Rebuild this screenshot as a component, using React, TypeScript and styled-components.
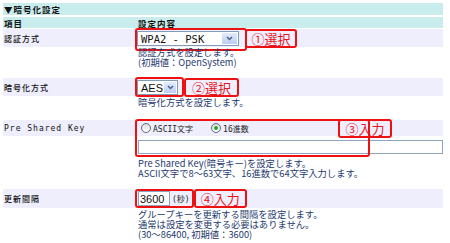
import React from "react";
import styled, { createGlobalStyle } from "styled-components";

const GlobalStyle = createGlobalStyle`
  html, body { margin: 0; padding: 0; background: #ffffff; }
  body {
    width: 450px;
    height: 243px;
    overflow: hidden;
    font-family: "DejaVu Sans Mono", "Noto Sans CJK JP", monospace;
  }
`;

const Page = styled.div`
  width: 440px;
  padding: 3px 0 0 3px;
`;

const HeadBar = styled.div<{ $h: number; $after: number }>`
  display: grid;
  grid-template-columns: 134px 1fr;
  align-items: center;
  height: ${(p) => p.$h}px;
  margin-bottom: ${(p) => p.$after}px;
  background: #c9eded;
  color: #111111;
  font-family: "Noto Sans CJK JP", sans-serif;
  font-weight: bold;
  font-size: 8.5px;
  letter-spacing: 1px;
  padding-left: 1px;
`;

const Item = styled.div<{ $after: number }>`
  position: relative;
  margin-bottom: ${(p) => p.$after}px;
`;

const Band = styled.div<{ $h: number }>`
  display: grid;
  grid-template-columns: 134px 1fr;
  align-items: center;
  height: ${(p) => p.$h}px;
  background: #eeeefc;
`;

const Label = styled.div`
  padding-left: 1px;
  font-size: 8px;
  font-weight: 500;
  letter-spacing: 1px;
  color: #111111;
`;

const Value = styled.div`
  display: flex;
  align-items: center;
`;

const Detail = styled.div<{ $top?: number }>`
  padding: ${(p) => p.$top ?? 0}px 0 0 135px;
  font-family: "Noto Sans CJK JP", sans-serif;
  font-size: 9.3px;
  line-height: 10px;
  color: #1e3a6e;
  white-space: nowrap;
`;

const Mark = styled.div<{ $pad: string; $margin: string }>`
  display: flex;
  align-items: center;
  border: 2px solid #ee1111;
  border-radius: 3px;
  padding: ${(p) => p.$pad};
  margin: ${(p) => p.$margin};
`;

const Tag = styled.div<{ $w: number; $shift?: number }>`
  display: flex;
  align-items: center;
  justify-content: center;
  box-sizing: border-box;
  width: ${(p) => p.$w}px;
  height: 19px;
  margin-left: ${(p) => p.$shift ?? 0}px;
  border: 2px solid #ee1111;
  border-radius: 3px;
  color: #e8141c;
  font-family: "Noto Sans CJK JP", sans-serif;
  font-size: 13px;
  line-height: 1;
`;

const FloatFrame = styled.div`
  position: absolute;
  left: 132px;
  top: -1px;
  width: 235px;
  height: 38px;
  box-sizing: border-box;
  border: 2px solid #ee1111;
  border-radius: 3px;
  pointer-events: none;
`;

const FloatTag = styled(Tag)`
  position: absolute;
  left: 335px;
  top: -1px;
`;

const Select = styled.div<{ $w: number }>`
  display: flex;
  align-items: stretch;
  box-sizing: border-box;
  width: ${(p) => p.$w}px;
  height: 15px;
  border: 1px solid #7f9db9;
  background: #ffffff;
`;

const SelectText = styled.div<{ $mono?: boolean }>`
  flex: 1;
  display: flex;
  align-items: center;
  padding-left: 3px;
  font-family: ${(p) => (p.$mono ? `"DejaVu Sans Mono", monospace` : `"Liberation Sans", Arial, sans-serif`)};
  font-size: ${(p) => (p.$mono ? 10.5 : 11)}px;
  color: #111111;
`;

const SelectButton = styled.div`
  width: 15px;
  display: flex;
  align-items: center;
  justify-content: center;
  border: 1px solid #ffffff;
  background: linear-gradient(#e4ebfd, #bccdf6);
`;

const Chevron = () => (
  <svg width="7" height="5" viewBox="0 0 7 5">
    <path d="M1 1 L3.5 3.5 L6 1" fill="none" stroke="#4d6185" strokeWidth="1.5" />
  </svg>
);

const TextBox = styled.input<{ $w: number; $h: number }>`
  box-sizing: border-box;
  width: ${(p) => p.$w}px;
  height: ${(p) => p.$h}px;
  margin: 0;
  padding: 0 1px;
  border: 1px solid #8fa6c0;
  background: #ffffff;
  font-family: "Liberation Sans", Arial, sans-serif;
  font-size: 11px;
  color: #111111;
  outline: none;
`;

const InputRow = styled.div`
  padding: 4px 0 0 135px;
  display: flex;
`;

const Unit = styled.span`
  margin-left: 2px;
  font-size: 8px;
  color: #222222;
`;

const RadioGroup = styled.div`
  display: flex;
  align-items: center;
  padding-left: 4px;
  font-size: 8px;
  color: #222222;
`;

const RadioItem = styled.label`
  display: flex;
  align-items: center;
  gap: 2px;
  margin-right: 18px;
`;

const Radio = styled.span<{ $on?: boolean }>`
  position: relative;
  box-sizing: border-box;
  width: 10px;
  height: 10px;
  border-radius: 50%;
  border: 1px solid #5a6c86;
  background: linear-gradient(#dcdcdc, #ffffff);
  &::after {
    content: "";
    display: ${(p) => (p.$on ? "block" : "none")};
    position: absolute;
    left: 2px;
    top: 2px;
    width: 4px;
    height: 4px;
    border-radius: 50%;
    background: #28a828;
  }
`;

export default function App() {
  return (
    <Page>
      <GlobalStyle />
      <HeadBar $h={12} $after={2}>
        <span>▼暗号化設定</span>
      </HeadBar>
      <HeadBar $h={11} $after={1}>
        <span>項目</span>
        <span>設定内容</span>
      </HeadBar>

      <Item $after={11}>
        <Band $h={18}>
          <Label>認証方式</Label>
          <Value>
            <Mark $pad="1px 6px 3px 0" $margin="-3px 0 -5px -2px">
              <Select $w={102}>
                <SelectText $mono>WPA2 - PSK</SelectText>
                <SelectButton>
                  <Chevron />
                </SelectButton>
              </Select>
            </Mark>
            <Tag $w={52} $shift={-2}>①選択</Tag>
          </Value>
        </Band>
        <Detail>
          認証方式を設定します。
          <br />
          (初期値：OpenSystem)
        </Detail>
      </Item>

      <Item $after={13}>
        <Band $h={18}>
          <Label>暗号化方式</Label>
          <Value>
            <Mark $pad="1px 4px 0 0" $margin="-3px 0 -2px -2px">
              <Select $w={41}>
                <SelectText>AES</SelectText>
                <SelectButton>
                  <Chevron />
                </SelectButton>
              </Select>
            </Mark>
            <Tag $w={55}>②選択</Tag>
          </Value>
        </Band>
        <Detail $top={1}>暗号化方式を設定します。</Detail>
      </Item>

      <Item $after={11}>
        <Band $h={16}>
          <Label>Pre Shared Key</Label>
          <RadioGroup>
            <RadioItem>
              <Radio />
              ASCII文字
            </RadioItem>
            <RadioItem>
              <Radio $on />
              16進数
            </RadioItem>
          </RadioGroup>
        </Band>
        <InputRow>
          <TextBox $w={305} $h={14} readOnly defaultValue="" />
        </InputRow>
        <Detail $top={4}>
          Pre Shared Key(暗号キー)を設定します。
          <br />
          ASCII文字で8～63文字、16進数で64文字入力します。
        </Detail>
        <FloatFrame />
        <FloatTag $w={54}>③入力</FloatTag>
      </Item>

      <Item $after={0}>
        <Band $h={19}>
          <Label>更新間隔</Label>
          <Value>
            <Mark $pad="0 2px 0 1px" $margin="0 0 0 -2px">
              <TextBox $w={32} $h={15} readOnly defaultValue="3600" />
              <Unit>(秒)</Unit>
            </Mark>
            <Tag $w={53}>④入力</Tag>
          </Value>
        </Band>
        <Detail $top={1}>
          グループキーを更新する間隔を設定します。
          <br />
          通常は設定を変更する必要はありません。
          <br />
          (30～86400, 初期値：3600)
        </Detail>
      </Item>
    </Page>
  );
}
